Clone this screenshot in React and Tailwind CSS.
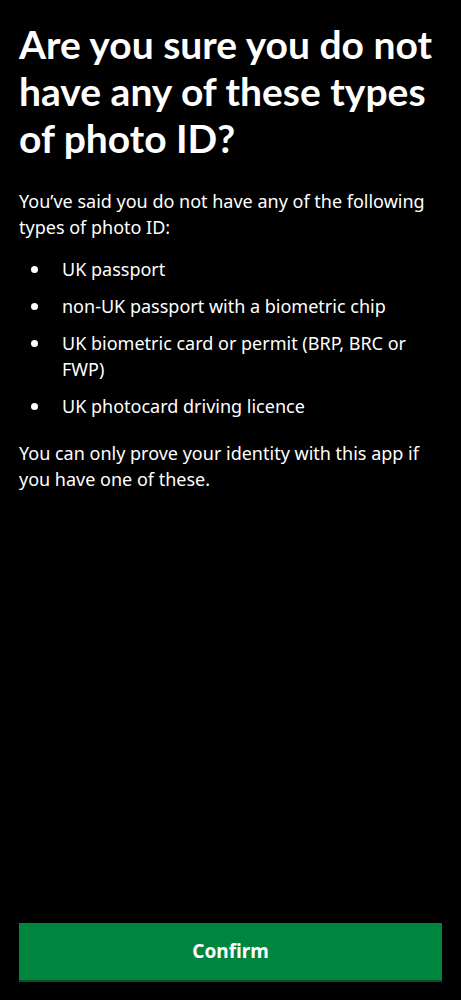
export default function App() {
  const items = [
    'UK passport',
    'non-UK passport with a biometric chip',
    'UK biometric card or permit (BRP, BRC or FWP)',
    'UK photocard driving licence',
  ]

  return (
    <div className="min-h-[1000px] bg-black text-white flex flex-col px-[19px] font-['Noto_Sans',sans-serif]">
      {/* Content */}
      <div className="flex-1 pt-[21px]">
        <h1 className="text-[39px] leading-[47px] font-bold font-['Lato',sans-serif]">
          Are you sure you do not have any of these types of photo ID?
        </h1>

        <p className="mt-[26px] text-[18px] leading-[26px]">
          You’ve said you do not have any of the following types of photo ID:
        </p>

        <ul className="mt-[16px] flex flex-col gap-[11px] text-[18px] leading-[26px]">
          {items.map((item) => (
            <li key={item} className="flex">
              <span className="w-[43px] shrink-0 h-[26px] flex items-center pl-[12px]">
                <span className="w-[7px] h-[7px] rounded-full bg-white" />
              </span>
              <span>{item}</span>
            </li>
          ))}
        </ul>

        <p className="mt-[21px] text-[18px] leading-[26px]">
          You can only prove your identity with this app if you have one of these.
        </p>
      </div>

      {/* Confirm */}
      <div className="pb-[18px]">
        <button className="w-full h-[59px] bg-[#00853f] border-b-2 border-[#00522a] text-white text-[19px] font-bold">
          Confirm
        </button>
      </div>
    </div>
  )
}
